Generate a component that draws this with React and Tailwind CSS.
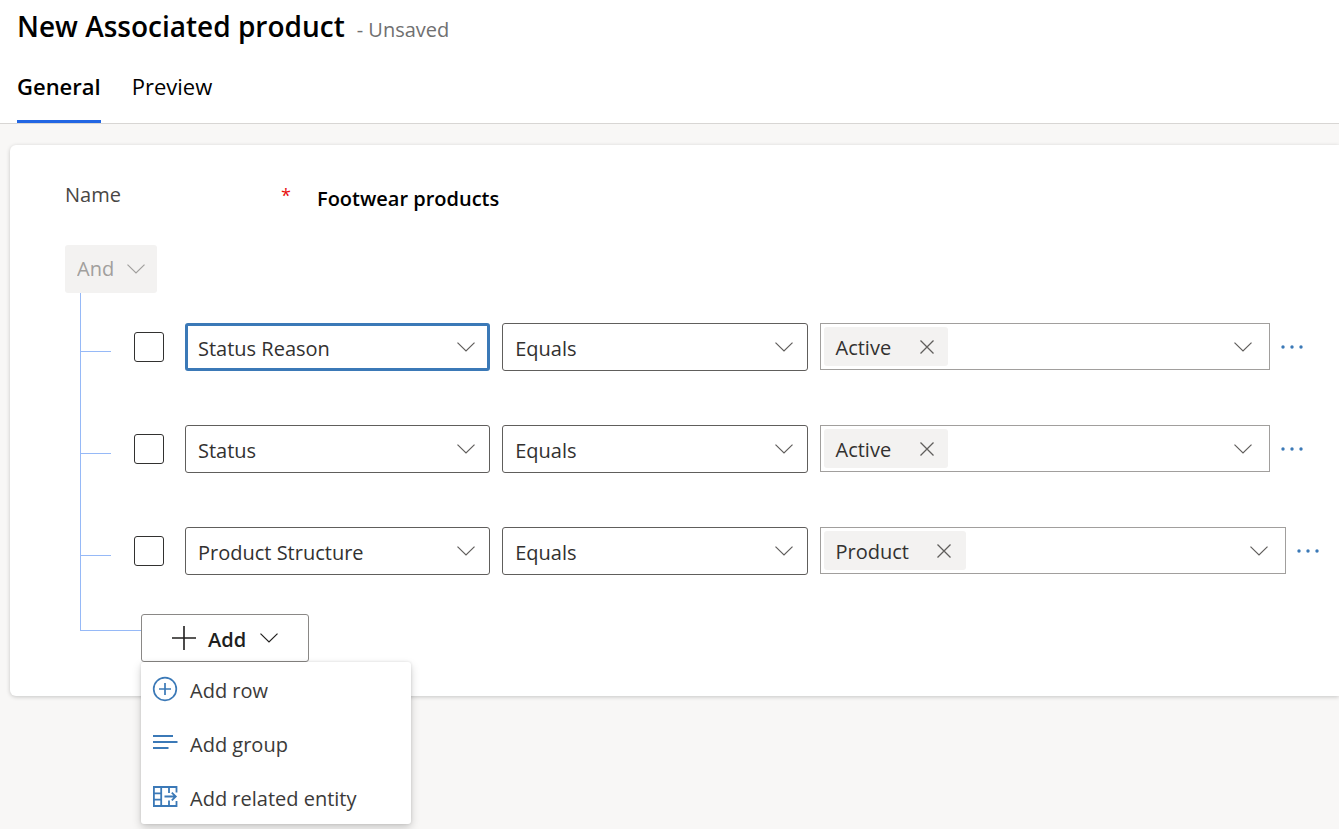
import { useState } from "react";

function Chevron({ className = "" }) {
  return (
    <svg
      className={`pointer-events-none h-[10px] w-[18px] ${className}`}
      viewBox="0 0 18 10"
      fill="none"
      stroke="currentColor"
      strokeWidth="1.2"
      aria-hidden="true"
    >
      <path d="M0.5 0.6 9 9l8.500-8.400" />
    </svg>
  );
}

function FieldSelect({ label, value, options, focused }) {
  const frame = focused
    ? "border-[3px] border-[#3b79b7] pl-[10px]"
    : "border border-[#605e5c] pl-3";
  return (
    <div className="relative min-w-0">
      <select
        aria-label={label}
        defaultValue={value}
        className={`block h-12 w-full appearance-none rounded-[3px] bg-white pt-1 pr-10 text-xl text-[#323130] outline-none ${frame}`}
      >
        {options.map((option) => (
          <option key={option}>{option}</option>
        ))}
      </select>
      <Chevron className="absolute top-[19px] right-[15px] text-[#605e5c]" />
    </div>
  );
}

function ValuePicker({ value }) {
  return (
    <div className="flex h-[47px] min-w-0 flex-1 items-center border border-[#a19f9d] bg-white p-[3px]">
      <span className="flex h-[39px] items-center rounded-[3px] bg-[#f3f2f1] pr-[2px] pl-3 text-xl text-[#323130]">
        <span className="pt-[2px]">{value}</span>
        <button
          type="button"
          aria-label={`Remove ${value}`}
          className="ml-4 flex h-full w-[39px] items-center justify-center text-[#605e5c]"
        >
          <svg className="size-4" viewBox="0 0 16 16" stroke="currentColor" strokeWidth="1.300" aria-hidden="true">
            <path d="M1.500 1.500l13 13M14.500 1.500l-13 13" />
          </svg>
        </button>
      </span>
      <button
        type="button"
        aria-label="Choose value"
        className="flex h-full flex-1 items-center justify-end pr-[14px] text-[#605e5c]"
      >
        <Chevron />
      </button>
    </div>
  );
}

const FIELDS = ["Status Reason", "Status", "Product Structure"];
const OPERATORS = ["Equals", "Does not equal"];

const CONDITIONS = [
  { field: "Status Reason", value: "Active", focused: true, inset: "pr-4" },
  { field: "Status", value: "Active", focused: false, inset: "pr-4" },
  { field: "Product Structure", value: "Product", focused: false, inset: "pr-0" },
];

function ConditionRow({ field, value, focused, inset }) {
  return (
    <li className="flex items-center">
      <span className="mt-2 h-px w-[30px] shrink-0 bg-[#96b9f7]" />
      <input
        type="checkbox"
        aria-label={`Select ${field}`}
        className="mr-[21px] ml-[23px] size-[30px] shrink-0 appearance-none rounded-[3px] border border-[#323130] bg-white"
      />
      <div className="grid min-w-0 flex-1 grid-cols-[11fr_11fr_18fr] gap-3">
        <FieldSelect label="Field" value={field} options={FIELDS} focused={focused} />
        <FieldSelect label="Operator" value="Equals" options={OPERATORS} />
        <div className={`flex min-w-0 ${inset}`}>
          <ValuePicker value={value} />
          <button
            type="button"
            aria-label="More commands"
            className="flex h-[47px] w-[33px] shrink-0 items-center justify-end text-[#3b79b7]"
          >
            <svg className="h-1 w-[22px]" viewBox="0 0 22 4" fill="currentColor" aria-hidden="true">
              <circle cx="2" cy="2" r="1.700" />
              <circle cx="11" cy="2" r="1.700" />
              <circle cx="20" cy="2" r="1.700" />
            </svg>
          </button>
        </div>
      </div>
    </li>
  );
}

function AddRowIcon() {
  return (
    <svg className="size-[26px]" viewBox="0 0 26 26" fill="none" stroke="currentColor" strokeWidth="1.700" aria-hidden="true">
      <circle cx="13" cy="13" r="11.300" />
      <path d="M13 7v12M7 13h12" />
    </svg>
  );
}

function AddGroupIcon() {
  return (
    <svg className="size-[26px]" viewBox="0 0 26 26" fill="none" stroke="currentColor" strokeWidth="1.800" aria-hidden="true">
      <path d="M1 6h20M1 12h24.500M1 18h15.500" />
    </svg>
  );
}

function AddEntityIcon() {
  return (
    <svg className="size-[26px]" viewBox="0 0 26 26" fill="none" stroke="currentColor" strokeWidth="1.800" aria-hidden="true">
      <path d="M24.500 8.500V3H1.900v19H24.500V17" />
      <path d="M1.900 9.300h7.300M1.900 15.700h7.300M9.200 3v19M17 3v6M17 16.500v5.500" />
      <path d="M12.500 12.500h11M19.800 8.600l4 3.900-4 3.900" />
    </svg>
  );
}

const MENU = [
  { label: "Add row", Icon: AddRowIcon },
  { label: "Add group", Icon: AddGroupIcon },
  { label: "Add related entity", Icon: AddEntityIcon },
];

function AddMenu() {
  const [open, setOpen] = useState(true);
  return (
    <div className="relative">
      <button
        type="button"
        aria-expanded={open}
        onClick={() => setOpen(!open)}
        className="flex h-12 w-[168px] items-center rounded-[3px] border border-[#8a8886] bg-white pl-[30px] text-xl font-semibold text-[#201f1e]"
      >
        <svg className="mr-3 size-6" viewBox="0 0 24 24" stroke="currentColor" strokeWidth="1.600" aria-hidden="true">
          <path d="M12 0v24M0 12h24" />
        </svg>
        <span className="pt-[3px]">Add</span>
        <Chevron className="ml-[14px]" />
      </button>
      {open && (
        <ul className="absolute top-12 left-0 z-10 w-[270px] rounded-[3px] bg-white shadow-[0_4px_10px_rgba(0,0,0,0.18),0_0_3px_rgba(0,0,0,0.12)]">
          {MENU.map(({ label, Icon }) => (
            <li key={label}>
              <button type="button" className="flex h-[54px] w-full items-center gap-3 pl-[11px] text-left text-xl text-[#3b3a39]">
                <span className="text-[#3b79b7]">
                  <Icon />
                </span>
                <span className="pt-[3px]">{label}</span>
              </button>
            </li>
          ))}
        </ul>
      )}
    </div>
  );
}

export default function App() {
  return (
    <div className="min-h-screen overflow-x-hidden bg-[#f8f7f6] font-['Open_Sans','Noto_Sans',sans-serif]">
      <header className="border-b border-[#d8d6d4] bg-white pt-2 pl-[17px]">
        <div className="flex items-baseline gap-3">
          <h1 className="text-[28px] leading-9 font-semibold text-black">New Associated product</h1>
          <span className="text-xl text-[#707070]">- Unsaved</span>
        </div>
        <nav className="mt-[26px] flex gap-[31px] text-[22px] leading-8 text-black">
          <button type="button" className="border-b-[3px] border-[#2266e3] pb-[18px] font-semibold">
            General
          </button>
          <button type="button" className="border-b-[3px] border-transparent pb-[18px]">
            Preview
          </button>
        </nav>
      </header>

      <main className="pt-[21px] pl-[10px]">
        <section className="rounded-l-md bg-white pt-9 pr-5 pb-[34px] pl-[55px] shadow-[0_1px_4px_rgba(0,0,0,0.2)]">
          <div className="flex items-start text-xl leading-7">
            <label htmlFor="name" className="flex w-[226px] justify-between text-[#484644]">
              Name
              <span className="text-lg leading-7 text-[#e81010]">*</span>
            </label>
            <input
              id="name"
              defaultValue="Footwear products"
              className="mb-[2px] ml-[26px] h-[34px] min-w-0 flex-1 bg-transparent font-semibold text-black outline-none"
            />
          </div>

          <div className="relative mt-7 w-[92px]">
            <select
              aria-label="Group operator"
              disabled
              className="block h-12 w-full appearance-none rounded-[3px] bg-[#f3f2f1] pl-3 text-xl text-[#a19f9d] opacity-100"
            >
              <option>And</option>
              <option>Or</option>
            </select>
            <Chevron className="absolute top-[19px] right-3 text-[#a19f9d]" />
          </div>

          <div className="ml-[15px]">
            <ul className="flex flex-col gap-[54px] border-l border-[#96b9f7] pt-[30px] pb-[39px]">
              {CONDITIONS.map((condition) => (
                <ConditionRow key={condition.field} {...condition} />
              ))}
            </ul>
            <div className="flex items-start">
              <span className="h-[17px] w-[61px] border-b border-l border-[#96b9f7]" />
              <AddMenu />
            </div>
          </div>
        </section>
      </main>
    </div>
  );
}
